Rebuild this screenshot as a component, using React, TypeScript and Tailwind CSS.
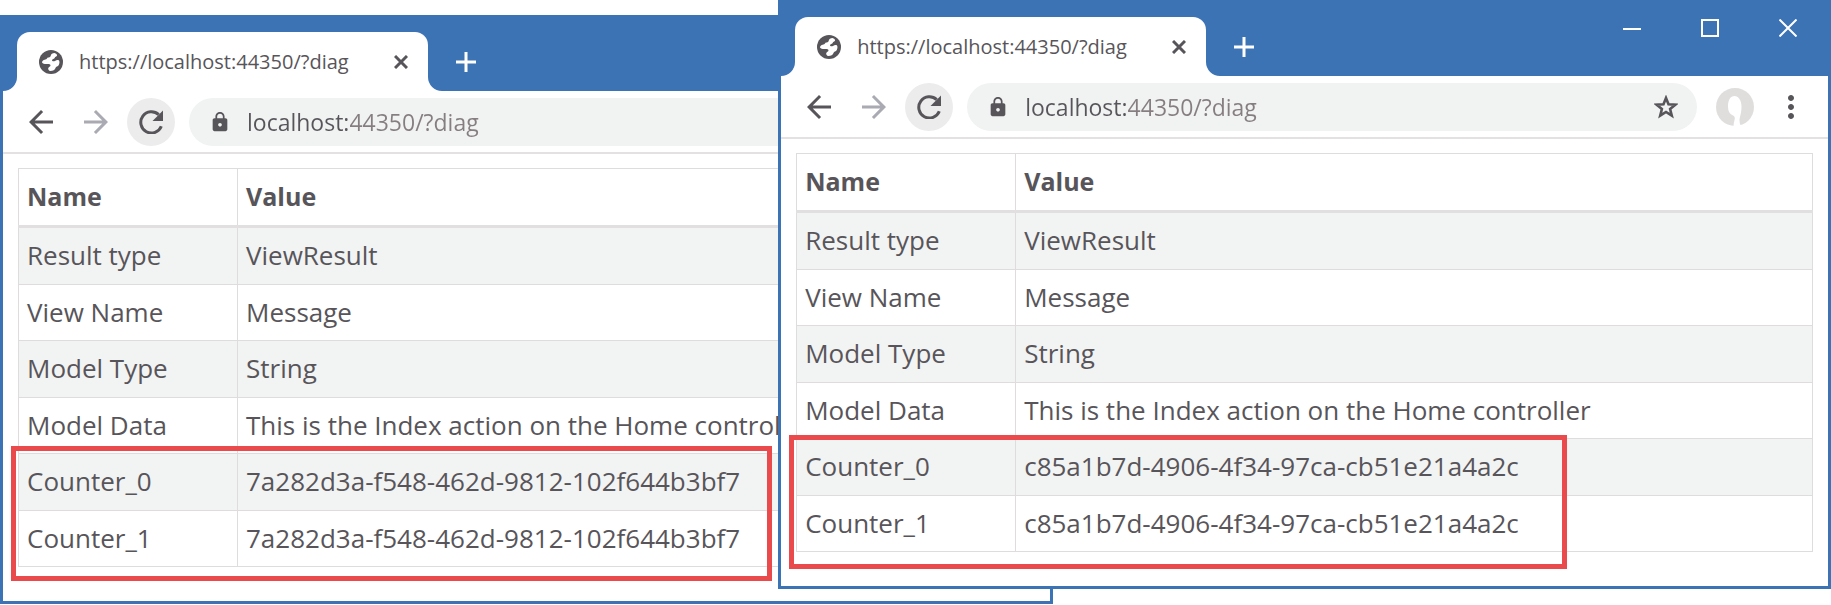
import React from "react";
import { MdLock, MdArrowBack, MdArrowForward, MdMoreVert } from "react-icons/md";

type Row = { name: string; value: string };

const baseRows: Row[] = [
  { name: "Result type", value: "ViewResult" },
  { name: "View Name", value: "Message" },
  { name: "Model Type", value: "String" },
  { name: "Model Data", value: "This is the Index action on the Home controller" },
];

function counters(guid: string): Row[] {
  return [
    { name: "Counter_0", value: guid },
    { name: "Counter_1", value: guid },
  ];
}

function GlobeIcon() {
  return (
    <svg className="size-6 shrink-0" viewBox="0 0 24 24">
      <circle cx="12" cy="12" r="12" fill="currentColor" />
      <path
        d="M15.500 3C13.500 3.200 12 4 11.800 5.500 11.500 7 10.500 7.500 9 7.500c-.8 0-.8 1.300-1.800 1.800C5 10 3 10.500 3 12.500c1 1.500 3.500 1.800 5.500 1.500 1.800-.2 3 .3 3 1.500 0 1.200-2 1.500-2.300 2.700-.2 1.200.8 2.500 2 2.800C14 21 16 19.800 16.500 18c.4-1.500 2.500-1.500 3.300-3 .7-1.500 1-3.200.2-4.500-1.300-.8-2.800-.2-4 .5-1.200.6-3 .5-3-.7 0-1.500 2.500-1 2.800-2.600.2-1.200 1.700-1 2.200-2C18.300 4.500 17 3.300 15.500 3z"
        fill="#fff"
      />
    </svg>
  );
}

function ReloadIcon() {
  return (
    <svg className="size-6" viewBox="0 0 24 24" fill="none">
      <path d="M22.300 16.200A10.600 10.600 0 1 1 19.700 4.700" stroke="currentColor" strokeWidth="3" />
      <path d="M24 .5V11H13.500z" fill="currentColor" />
    </svg>
  );
}

function StarIcon() {
  return (
    <svg className="size-6" viewBox="0 0 24 24" fill="none">
      <path d="M12 3l2.500 6.300 6.800.4-5.200 4.300 1.700 6.700L12 17l-5.800 3.700L7.900 14 2.700 9.700l6.800-.4z" stroke="currentColor" strokeWidth="2.600" />
    </svg>
  );
}

function WindowControls() {
  return (
    <div className="flex h-14 items-center gap-[60px] self-start pr-[31px] text-white">
      <button type="button" aria-label="Minimize">
        <svg className="size-[18px]" viewBox="0 0 18 18" fill="none" stroke="currentColor" strokeWidth="2">
          <path d="M0 10h18" />
        </svg>
      </button>
      <button type="button" aria-label="Maximize">
        <svg className="size-[18px]" viewBox="0 0 18 18" fill="none" stroke="currentColor" strokeWidth="2">
          <path d="M1 1h16v16H1z" />
        </svg>
      </button>
      <button type="button" aria-label="Close">
        <svg className="size-[18px]" viewBox="0 0 18 18" fill="none" stroke="currentColor" strokeWidth="2">
          <path d="M.5 .5l17 17M17.5 .5l-17 17" />
        </svg>
      </button>
    </div>
  );
}

function TabStrip() {
  return (
    <header className="flex h-[76px] items-end bg-[#3c73b5]">
      <svg className="size-3.5 text-white" viewBox="0 0 14 14" fill="currentColor">
        <path d="M14 0v14H0A14 14 0 0 0 14 0z" />
      </svg>
      <div className="flex h-[59px] w-[411px] items-center rounded-t-[13px] bg-white pr-5 pl-[22px]">
        <GlobeIcon />
        <span className="flex-1 pl-4 text-[20px] whitespace-nowrap">https://localhost:44350/?diag</span>
        <button type="button" aria-label="Close tab">
          <svg className="size-[14px]" viewBox="0 0 14 14" fill="none" stroke="currentColor" strokeWidth="3">
            <path d="M1 1l12 12M13 1L1 13" />
          </svg>
        </button>
      </div>
      <svg className="size-3.5 text-white" viewBox="0 0 14 14" fill="currentColor">
        <path d="M0 0v14h14A14 14 0 0 1 0 0z" />
      </svg>
      <button type="button" aria-label="New tab" className="flex h-[59px] items-center pl-[14px] text-white">
        <svg className="size-5" viewBox="0 0 20 20" fill="none" stroke="currentColor" strokeWidth="3">
          <path d="M10 0v20M0 10h20" />
        </svg>
      </button>
      <div className="flex-1" />
      <WindowControls />
    </header>
  );
}

function Toolbar() {
  return (
    <div className="flex h-[63px] items-center border-b-2 border-[#e3e1e2] pl-[20px]">
      <button type="button" aria-label="Back">
        <MdArrowBack className="size-9" />
      </button>
      <button type="button" aria-label="Forward" className="ml-[19px] text-[#a9aab2]">
        <MdArrowForward className="size-9" />
      </button>
      <button type="button" aria-label="Reload" className="ml-[13px] flex size-12 items-center justify-center rounded-full bg-[#ececec]">
        <ReloadIcon />
      </button>
      <div className="ml-[14px] flex h-12 flex-1 items-center rounded-full bg-[#f1f3f3] pr-[19px] pl-5">
        <MdLock className="size-[22px] shrink-0" />
        <input
          type="text"
          aria-label="Address"
          defaultValue="localhost:44350/?diag"
          className="ml-4 h-10 min-w-0 flex-1 bg-linear-to-r from-[#58555a] from-[103px] to-[#857d80] to-[103px] bg-clip-text text-[23px] text-transparent outline-none"
        />
        <button type="button" aria-label="Bookmark this page">
          <StarIcon />
        </button>
      </div>
      <button type="button" aria-label="Profile" className="ml-[19px]">
        <svg className="size-[38px]" viewBox="0 0 38 38">
          <circle cx="19" cy="19" r="19" fill="#e0dddd" />
          <path d="M18.500 8c-4 0-6.500 4-6.500 10 0 5 1.500 8 5 9.500 2 1 2 2.500 1.500 4.500-.5 2-1 4-1 6.500h7.500c-1-2-1.500-4-1.500-6 0-3 2-7 2-14 0-6-3-10.500-7-10.500z" fill="#fff" />
        </svg>
      </button>
      <button type="button" aria-label="Menu" className="mr-[19px] ml-[19px]">
        <MdMoreVert className="size-9" />
      </button>
    </div>
  );
}

function BrowserWindow({ guid, className, highlight }: { guid: string; className: string; highlight: string }) {
  return (
    <section className={`absolute overflow-hidden border-x-[3px] border-b-[3px] border-[#3c73b5] bg-white ${className}`}>
      <TabStrip />
      <Toolbar />
      <div className="px-[15px] pt-[14px] pb-[34px]">
        <table className="h-[399px] w-full border-collapse text-[26px]">
          <thead>
            <tr className="h-[58px] border-b-[3px] border-[#e2dfe0] text-[25px]">
              <th className="w-[219px] border-x border-t border-[#dedcdd] px-2 text-left font-bold">Name</th>
              <th className="border-x border-t border-[#dedcdd] px-2 text-left font-bold">Value</th>
            </tr>
          </thead>
          <tbody>
            {[...baseRows, ...counters(guid)].map((row) => (
              <tr key={row.name} className="odd:bg-[#f2f3f3]">
                <td className="border border-[#dedcdd] px-2">{row.name}</td>
                <td className="border border-[#dedcdd] px-2 whitespace-nowrap">{row.value}</td>
              </tr>
            ))}
          </tbody>
        </table>
      </div>
      <div className={`pointer-events-none absolute left-2 border-[5px] border-[#eb4a4d] ${highlight}`} />
    </section>
  );
}

export default function App() {
  return (
    <main className="relative min-h-[605px] overflow-hidden bg-white font-['Open_Sans','Noto_Sans',sans-serif] text-[#58555a]">
      <BrowserWindow
        guid="7a282d3a-f548-462d-9812-102f644b3bf7"
        className="top-[15px] left-0 w-[57.5%]"
        highlight="top-[431px] h-[135px] w-[761px]"
      />
      <BrowserWindow
        guid="c85a1b7d-4906-4f34-97ca-cb51e21a4a2c"
        className="top-0 right-0 w-[57.5%]"
        highlight="top-[435px] h-[134px] w-[778px]"
      />
    </main>
  );
}
